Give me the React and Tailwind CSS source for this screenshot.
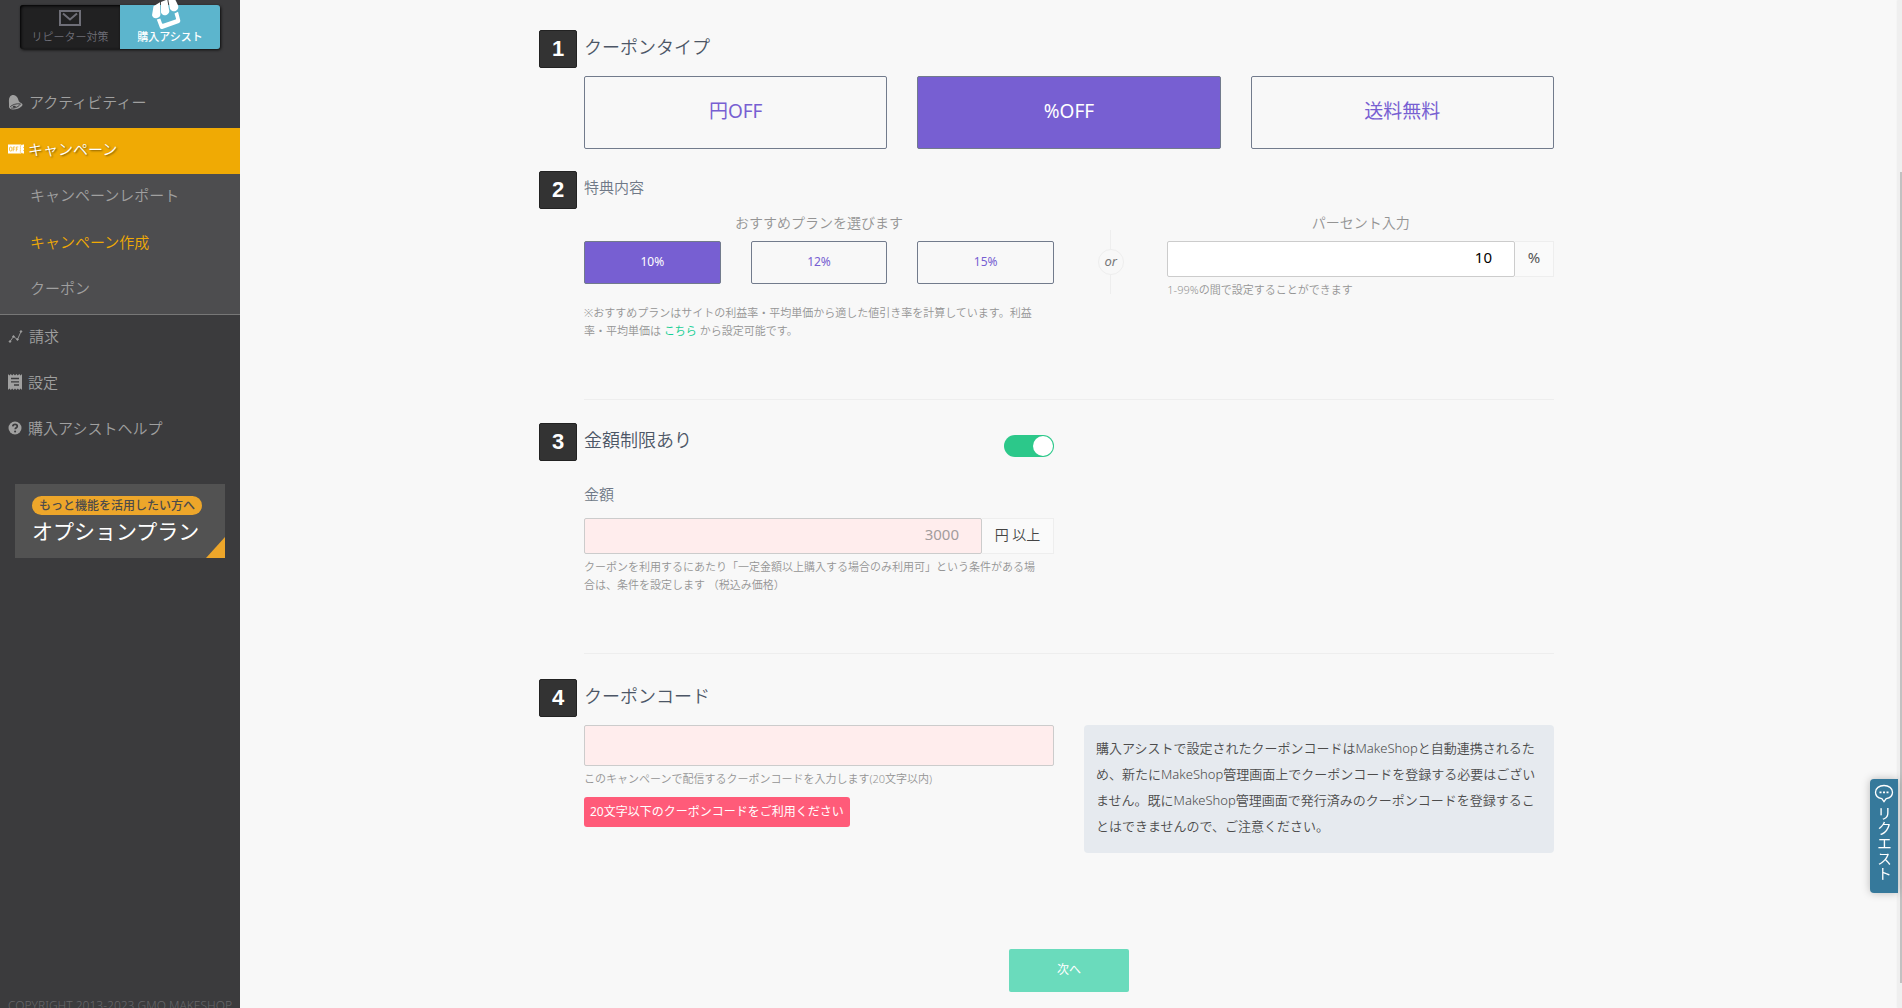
import { useState } from "react";

const navText = "text-[15px] leading-[22px]";

function BellIcon() {
  return (
    <svg viewBox="0 0 15 16" className="h-4 w-[15px]" fill="currentColor" aria-hidden="true">
      <path d="M1 13C1.400 9.500.2 5.200 1.800 3 3 1.100 5.600.6 7.600 1.700c2.400 1.300 2.600 3.900 3.300 5.600.6 1.300 2.600 1.500 3.400 2.600.5.9 0 1.800-.9 2.600-2 1.800-5.500 3.200-8.800 3-1.900-.1-3.200-1.100-3.600-2.500Z" />
      <path d="M2.200 12.800c1.600-1.800 6-3.600 10.200-2.900-1 2.300-5 4.600-9.200 4.200" fill="none" stroke="#3b3b3d" strokeWidth=".9" />
      <ellipse cx="6.300" cy="12.700" rx="1.500" ry="1" fill="#3b3b3d" />
    </svg>
  );
}

function TicketIcon() {
  return (
    <svg viewBox="0 0 16 10" className="h-[10px] w-4" aria-hidden="true">
      <path d="M0 .5h13.200l.7 1 .7-1H16v2.300l-.8.7.8.8v1.400l-.8.8.8.8v2.200h-1.400l-.7-1-.7 1H0z" fill="#fff" />
      <rect x="1.500" y="3" width="2.400" height="4" rx="1" fill="none" stroke="#f0aa04" strokeWidth=".7" />
      <path d="M5.200 7.300V3h2M5.200 5.100h1.600M8.300 7.300V3h2M8.300 5.100h1.600" fill="none" stroke="#f0aa04" strokeWidth=".7" />
      <path d="M12.400 1.500v7" stroke="#f0aa04" strokeWidth=".8" strokeDasharray="1.200 .8" />
    </svg>
  );
}

function ChartIcon() {
  return (
    <svg viewBox="0 0 15 14" className="h-[14px] w-[15px]" fill="currentColor" stroke="currentColor" aria-hidden="true">
      <path d="M2 12.500 5.500 7.500 9.500 10.500 13 2.500" fill="none" strokeWidth=".9" />
      <circle cx="2" cy="12.500" r=".8" />
      <circle cx="5.500" cy="7.500" r=".8" />
      <circle cx="9.500" cy="10.500" r=".8" />
      <circle cx="13" cy="2.500" r=".8" />
    </svg>
  );
}

function ReceiptIcon() {
  return (
    <svg viewBox="0 0 14 16" className="h-4 w-[14px]" aria-hidden="true">
      <path d="M0 0l1.400 1.500L2.800 0l1.400 1.500L5.600 0 7 1.500 8.400 0l1.400 1.500L11.200 0l1.400 1.500L14 0v16l-1.400-1.500-1.400 1.500-1.400-1.500L8.400 16 7 14.500 5.600 16l-1.400-1.500L2.800 16l-1.400-1.500L0 16z" fill="currentColor" />
      <path d="M3 4.500h8M3 7.800h8M6 11h5" stroke="#3b3b3d" strokeWidth="1.300" />
    </svg>
  );
}

function HelpIcon() {
  return (
    <svg viewBox="0 0 14 14" className="h-[14px] w-[14px]" aria-hidden="true">
      <circle cx="7" cy="7" r="6.500" fill="currentColor" />
      <path d="M4.800 5.400C4.900 4 5.800 3.300 7.100 3.300c1.300 0 2.200.8 2.200 1.900 0 1.500-2.100 1.500-2.100 3" fill="none" stroke="#3b3b3d" strokeWidth="1.700" />
      <circle cx="7.100" cy="10.500" r="1.050" fill="#3b3b3d" />
    </svg>
  );
}

function MailIcon() {
  return (
    <svg viewBox="0 0 22 16" className="h-4 w-[22px] shrink-0" fill="none" stroke="#6f6f78" strokeWidth="2" aria-hidden="true">
      <path d="M1 1h20v14H1zM4 3.500l7 6 7-6" />
    </svg>
  );
}

function ShopIcon() {
  return (
    <svg viewBox="0 0 30 31" className="mr-2 h-[31px] w-[30px] shrink-0" fill="#fff" aria-hidden="true">
      <path d="M2.500 7.300 9 3.300 9.300 14a4.300 4.300 0 0 1-8.300 2.200z" />
      <path d="M9.900 2.900 16.300.5 18 10.500a4.200 4.200 0 0 1-8 3z" />
      <path d="M17.200.2 23-2 27 6.200A4.200 4.200 0 0 1 18.900 9.500z" />
      <path d="M5.800 20.600 9.300 19.400 11 24.300Q11.300 25 12 24.700L24.500 20.500Q25.300 20.200 25 19.400L23.500 14.500 27 12.800 29.300 21.500Q29.500 23.300 28 23.900L11.300 29.900Q9.600 30.300 8.900 28.700z" />
    </svg>
  );
}

function BubbleIcon() {
  return (
    <svg viewBox="0 0 20 20" className="h-5 w-5" fill="none" stroke="#fff" strokeWidth="1.300" aria-hidden="true">
      <path d="M10 1.500c4.800 0 8.500 2.800 8.500 6.700 0 3.600-2.700 5.800-6.300 6.500L10 17.600l-2.200-2.900C4.200 14 1.500 11.800 1.500 8.200c0-3.900 3.700-6.700 8.500-6.700Z" />
      <path d="M5.500 8.300h2M9 8.300h2M12.500 8.300h2" strokeWidth="1.800" />
    </svg>
  );
}

function NavLink({ icon, children }) {
  return (
    <a href="#" className={`flex h-[46px] items-center gap-1.5 pb-1 pl-2 text-[#a0a0a0] ${navText}`}>
      {icon}
      {children}
    </a>
  );
}

function Sidebar() {
  return (
    <aside className="flex h-screen w-60 shrink-0 flex-col overflow-hidden bg-[#3b3b3d]">
      <div className="mx-5 mt-[5px] mb-8 flex h-11 w-[200px] rounded-[3px] text-[11px] leading-[14px] shadow-[1px_1px_3px_rgba(0,0,0,0.8)]">
        <button type="button" className="flex flex-1 flex-col items-center justify-end gap-1 rounded-l-[3px] bg-[#212122] pb-[5px] text-[#6f6f78] shadow-[inset_1px_1px_3px_#000]">
          <MailIcon />
          リピーター対策
        </button>
        <button type="button" className="flex flex-1 flex-col items-center justify-end rounded-r-[3px] bg-[#5cb5cd] pb-[5px] font-medium text-white">
          <ShopIcon />
          購入アシスト
        </button>
      </div>

      <nav>
        <NavLink icon={<BellIcon />}>アクティビティー</NavLink>
        <a href="#" className={`mt-px flex h-[46px] items-center gap-1 bg-[#f0aa04] pb-1 pl-2 text-white [text-shadow:1px_1px_2px_rgba(0,0,0,0.5)] ${navText}`}>
          <TicketIcon />
          キャンペーン
        </a>
        <ul className={`border-b border-[#777] bg-[#4d4d4f] pb-0.5 text-[#a0a0a0] ${navText}`}>
          <li><a href="#" className="flex h-[46px] items-center pb-1 pl-[30px]">キャンペーンレポート</a></li>
          <li><a href="#" className="flex h-[46px] items-center pb-0.5 pl-[30px] text-[#f0aa04]">キャンペーン作成</a></li>
          <li><a href="#" className="flex h-[46px] items-center pb-0.5 pl-[30px]">クーポン</a></li>
        </ul>
        <NavLink icon={<ChartIcon />}>請求</NavLink>
        <NavLink icon={<ReceiptIcon />}>設定</NavLink>
        <NavLink icon={<HelpIcon />}>購入アシストヘルプ</NavLink>
      </nav>

      <a href="#" className="relative mx-[15px] mt-[31px] flex flex-col items-start gap-0.5 bg-[#525252] py-3 pl-[17px] text-white">
        <span className="rounded-full bg-[#eda62a] px-[7px] text-[12px] leading-[19px] font-medium text-[#4b4b4b]">もっと機能を活用したい方へ</span>
        <span className="text-[21px] leading-[29px] font-normal">オプションプラン</span>
        <svg viewBox="0 0 19 21" className="absolute right-0 bottom-0 h-[21px] w-[19px]" fill="#eda62a" aria-hidden="true">
          <path d="M19 0v21H0z" />
        </svg>
      </a>

      <p className="mt-auto h-[9px] pl-2 text-[12px] leading-[14px] whitespace-nowrap text-[#67676a]">COPYRIGHT 2013-2023 GMO MAKESHOP</p>
    </aside>
  );
}

function StepHeading({ number, children }) {
  return (
    <>
      <span className="absolute right-full mr-[7px] flex h-[38px] w-[38px] items-center justify-center rounded-xs border border-[#222] bg-[#333] pb-0.5 font-['Liberation_Sans',sans-serif] text-[22px] font-bold text-white">
        {number}
      </span>
      {children}
    </>
  );
}

const headingClass = "text-[18px] leading-[34px] text-[#4c5666]";
const labelClass = "text-[15px] text-[#6f7887]";
const helpClass = "pr-4 text-[11px] leading-[18px] text-[#949494]";

function Choice({ selected, className, onClick, children }) {
  return (
    <button
      type="button"
      aria-pressed={selected}
      onClick={onClick}
      className={`rounded-xs border border-[#727b8c] ${selected ? "bg-[#775fd2] text-white" : "text-[#775fd2]"} ${className}`}
    >
      {children}
    </button>
  );
}

export default function App() {
  const [type, setType] = useState("%OFF");
  const [plan, setPlan] = useState("10%");

  return (
    <div className="flex h-screen overflow-hidden bg-[#f8f8f8] font-['Noto_Sans','Noto_Sans_CJK_JP',sans-serif] font-[350]">
      <Sidebar />

      <main className="h-screen flex-1 overflow-hidden px-[65px] pt-[30px]">
        <form className="mx-auto max-w-[970px]" onSubmit={(e) => e.preventDefault()}>
          <section className="relative">
            <StepHeading number="1">
              <h2 className={headingClass}>クーポンタイプ</h2>
            </StepHeading>
            <div className="mt-3 grid grid-cols-3 gap-[30px]">
              {["円OFF", "%OFF", "送料無料"].map((t) => (
                <Choice key={t} selected={type === t} onClick={() => setType(t)} className="h-[73px] pb-0.5 text-[19px] font-normal">
                  {t}
                </Choice>
              ))}
            </div>
          </section>

          <section className="relative mt-[22px]">
            <StepHeading number="2">
              <h2 className={`pb-0.5 leading-8 ${labelClass}`}>特典内容</h2>
            </StepHeading>
            <div className="mt-2 grid grid-cols-12 gap-x-[30px]">
              <div className="col-span-6">
                <p className="text-center text-[14px] leading-5 text-[#949494]">おすすめプランを選びます</p>
                <div className="mt-2 grid grid-cols-3 gap-[30px]">
                  {["10%", "12%", "15%"].map((p) => (
                    <Choice key={p} selected={plan === p} onClick={() => setPlan(p)} className="h-[43px] pb-0.5 text-[12px] font-normal">
                      {p}
                    </Choice>
                  ))}
                </div>
                <p className={`mt-5 ${helpClass}`}>
                  ※おすすめプランはサイトの利益率・平均単価から適した値引き率を計算しています。利益率・平均単価は{" "}
                  <a href="#" className="font-normal text-[#18cf94]">こちら</a> から設定可能です。
                </p>
              </div>
              <div className="flex h-16 flex-col items-center self-start pt-[17px] text-[13px] font-normal text-[#777] italic">
                <span className="h-[19px] w-px shrink-0 bg-[#eee]" />
                <span className="flex h-[26px] w-[26px] shrink-0 items-center justify-center rounded-full border border-[#eee]">or</span>
                <span className="h-[19px] w-px shrink-0 bg-[#eee]" />
              </div>
              <div className="col-span-5">
                <label htmlFor="percent" className="block text-center text-[14px] leading-5 text-[#949494]">パーセント入力</label>
                <div className="mt-2 flex h-9">
                  <input id="percent" type="text" defaultValue="10" className="min-w-0 flex-1 rounded-xs border border-[#ccc] bg-white pr-[22px] pb-1 text-right text-[15px] font-normal text-black" />
                  <span className="flex w-[39px] items-center justify-center border border-l-0 border-[#eee] bg-[#fafafa] pb-1 text-[15px] font-normal text-[#555]">%</span>
                </div>
                <p className={`mt-1 ${helpClass}`}>1-99%の間で設定することができます</p>
              </div>
            </div>
          </section>

          <section className="relative mt-[59px] border-t border-[#eee] pt-[23px]">
            <StepHeading number="3">
              <div className="flex w-[calc(50%-15px)] items-end justify-between">
                <h2 id="limit-title" className={headingClass}>金額制限あり</h2>
                <input
                  type="checkbox"
                  role="switch"
                  defaultChecked
                  aria-labelledby="limit-title"
                  className="h-[22px] w-[50px] appearance-none rounded-full bg-[#c4c4c4] p-px before:block before:h-5 before:w-5 before:rounded-full before:bg-white before:content-[''] checked:bg-[#2cc88a] checked:before:ml-auto"
                />
              </div>
            </StepHeading>
            <div className="w-[calc(50%-15px)] pt-[27px] pb-[59px]">
              <label htmlFor="amount" className={`block leading-5 ${labelClass}`}>金額</label>
              <div className="mt-[14px] flex h-9">
                <input id="amount" type="text" placeholder="3000" className="min-w-0 flex-1 rounded-xs border border-[#ccc] bg-[#ffeded] pr-[22px] pb-1 text-right text-[15px] font-normal text-[#555] placeholder:text-[#a39c9c]" />
                <span className="flex w-[72px] items-center justify-center border border-l-0 border-[#eee] bg-[#fafafa] pb-1 text-[14px] whitespace-nowrap text-[#444]">円 以上</span>
              </div>
              <p className={`mt-1 ${helpClass}`}>
                クーポンを利用するにあたり「一定金額以上購入する場合のみ利用可」という条件がある場合は、条件を設定します （税込み価格）
              </p>
            </div>
          </section>

          <section className="relative border-t border-[#eee] pt-[25px]">
            <StepHeading number="4">
              <h2 className={headingClass}>
                <label htmlFor="code">クーポンコード</label>
              </h2>
            </StepHeading>
            <div className="mt-3 grid grid-cols-2 items-start gap-[30px]">
              <div>
                <input id="code" type="text" className="block h-[41px] w-full rounded-xs border border-[#ccc] bg-[#ffeded] px-3 text-[15px]" />
                <p className={`mt-1 ${helpClass}`}>このキャンペーンで配信するクーポンコードを入力します(20文字以内)</p>
                <p className="mt-[9px] inline-block rounded-[3px] bg-[#ff5b79] px-[6px] text-[12px] leading-[30px] font-normal text-white">20文字以下のクーポンコードをご利用ください</p>
              </div>
              <p className="rounded-sm bg-[#e6eaef] px-3 pt-[10px] pb-[14px] text-[13px] leading-[26px] text-[#4c4c4c]">
                購入アシストで設定されたクーポンコードはMakeShopと自動連携されるため、新たにMakeShop管理画面上でクーポンコードを登録する必要はございません。既にMakeShop管理画面で発行済みのクーポンコードを登録することはできませんので、ご注意ください。
              </p>
            </div>
          </section>

          <div className="mt-24 flex justify-center">
            <button type="submit" className="h-[43px] w-[120px] rounded-xs bg-[#6adbbc] pb-0.5 text-[12px] font-normal text-white">次へ</button>
          </div>
        </form>
      </main>

      <button type="button" className="fixed right-1 bottom-[115px] flex w-7 flex-col items-center gap-0.5 rounded-l-[4px] bg-[#36799b] pt-[5px] pb-3 text-[15px] font-normal text-white shadow-[0_0_8px_rgba(0,0,0,0.25)]">
        <BubbleIcon />
        <span className="leading-5 [writing-mode:vertical-rl]">リクエスト</span>
      </button>

      <div className="flex h-screen w-1 justify-end bg-[#efefef] pt-[172px] pb-[25px] shadow-[-1px_0_2px_rgba(0,0,0,0.05)]">
        <span className="w-[2px] bg-[#c1c1c1]" />
      </div>
    </div>
  );
}
